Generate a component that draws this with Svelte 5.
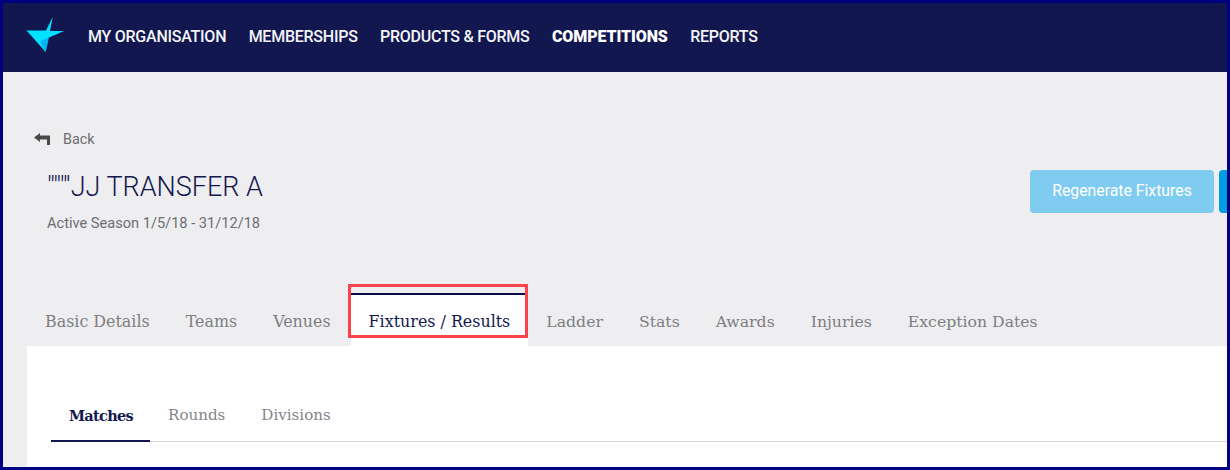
<script>
  const navItems = [
    { label: "MY ORGANISATION" },
    { label: "MEMBERSHIPS" },
    { label: "PRODUCTS & FORMS" },
    { label: "COMPETITIONS", active: true },
    { label: "REPORTS" },
  ];
  const tabs = ["Basic Details", "Teams", "Venues", "Fixtures / Results", "Ladder", "Stats", "Awards", "Injuries", "Exception Dates"];
  const subTabs = ["Matches", "Rounds", "Divisions"];
</script>

<div class="frame">
  <header class="nav">
    <svg class="logo" width="40" height="36" viewBox="0 0 40 36">
      <path d="M0.5 13.5 L20 13.5 L26.7 0 L24 14 L38 14 L22 21 L19.7 35 Z" fill="#00e1ff" />
      <path d="M14 24.5 L23 20.6 L19.7 35 Z" fill="#00b4f5" />
    </svg>
    <nav class="nav-items">
      {#each navItems as item}
        <span class:active={item.active}>{item.label}</span>
      {/each}
    </nav>
  </header>

  <main class="page">
    <div class="back">
      <svg width="17" height="12" viewBox="0 0 17 12">
        <path d="M0 4.5 L6 0 V2.5 H16 V12 H13 V6.5 H6 V9 Z" fill="#4a4a4a" />
      </svg>
      <span>Back</span>
    </div>

    <div class="title-row">
      <div class="title-block">
        <h1>"""'JJ TRANSFER A</h1>
        <p>Active Season 1/5/18 - 31/12/18</p>
      </div>
      <div class="actions">
        <button class="regen">Regenerate Fixtures</button>
        <button class="primary" aria-label="More"></button>
      </div>
    </div>

    <div class="tabs">
      {#each tabs as tab}
        <div class="tab" class:current={tab === "Fixtures / Results"}>
          {tab}
          {#if tab === "Fixtures / Results"}<div class="highlight"></div>{/if}
        </div>
      {/each}
    </div>

    <section class="panel">
      <div class="subtabs">
        {#each subTabs as tab, i}
          <div class="subtab" class:current={i === 0}>{tab}</div>
        {/each}
      </div>
    </section>
  </main>
</div>

<style>
  :global(body) {
    margin: 0;
    background: #eeeef0;
  }
  .frame {
    box-sizing: border-box;
    width: 1230px;
    height: 470px;
    border: 3px solid #000080;
    display: flex;
    flex-direction: column;
    overflow: hidden;
    font-family: Roboto, sans-serif;
  }
  .nav {
    flex: none;
    height: 69px;
    background: #12184f;
    display: flex;
    align-items: center;
    padding-left: 23px;
  }
  .logo {
    flex: none;
    margin-top: -5px;
  }
  .nav-items {
    display: flex;
    gap: 22.4px;
    margin-left: 22px;
    margin-top: -2px;
    color: #f4f4f8;
    font-size: 16px;
    font-weight: 500;
    letter-spacing: -0.25px;
  }
  .nav-items .active {
    color: #fff;
    font-weight: 900;
    letter-spacing: -0.1px;
  }
  .page {
    flex: 1;
    background: #eeeef0;
    padding: 59px 0 0 24px;
    min-height: 0;
    display: flex;
    flex-direction: column;
  }
  .back {
    display: flex;
    align-items: center;
    gap: 12px;
    padding-left: 7px;
    height: 16px;
    font-size: 14.4px;
    color: #6d6d72;
  }
  .title-row {
    display: flex;
    justify-content: space-between;
    margin-top: 22px;
    padding-left: 20px;
    height: 124px;
  }
  h1 {
    margin: 0;
    font-size: 27px;
    line-height: 36px;
    font-weight: 300;
    color: #12184f;
  }
  .title-block p {
    margin: 9px 0 0;
    font-size: 14.6px;
    line-height: 18px;
    color: #6d6d72;
  }
  .actions {
    display: flex;
    gap: 5px;
    margin-top: 1px;
    height: 43px;
  }
  .actions button {
    border: none;
    border-radius: 4px;
    height: 43px;
    padding: 0 0 2px;
    color: #fff;
    font: 400 15.8px Roboto, sans-serif;
  }
  .regen {
    width: 184px;
    background: #80cbf0;
  }
  .primary {
    width: 8px;
    border-radius: 4px 0 0 4px !important;
    background: #009de0;
  }
  .tabs {
    display: flex;
    height: 53px;
  }
  .tab {
    padding: 0 18px;
    height: 53px;
    line-height: 58px;
    box-sizing: border-box;
    font-family: "DejaVu Serif", serif;
    font-size: 15.9px;
    color: #7d7d82;
    white-space: nowrap;
  }
  .tab.current {
    position: relative;
    margin-left: 2px;
    background: #fff;
    color: #12184f;
    border-top: 2px solid #0b0b45;
    line-height: 54px;
  }
  .tab.current ~ .tab {
    font-size: 15.7px;
  }
  .highlight {
    position: absolute;
    left: -3px;
    right: 0;
    top: -11px;
    height: 54px;
    box-sizing: border-box;
    border: 3px solid #f8444a;
  }
  .panel {
    flex: 1;
    background: #fff;
    padding: 41px 0 0 24px;
  }
  .subtabs {
    display: flex;
    border-bottom: 1px solid #d9d9dc;
    height: 55px;
    box-sizing: border-box;
  }
  .subtab {
    padding: 0 18px;
    line-height: 57px;
    height: 55px;
    box-sizing: border-box;
    font-family: "DejaVu Serif", serif;
    font-size: 15.1px;
    color: #85858a;
  }
  .subtab.current {
    padding-right: 17px;
    color: #12184f;
    font-weight: 700;
    font-size: 14.5px;
    letter-spacing: -0.7px;
    border-bottom: 2px solid #12184f;
  }
</style>
